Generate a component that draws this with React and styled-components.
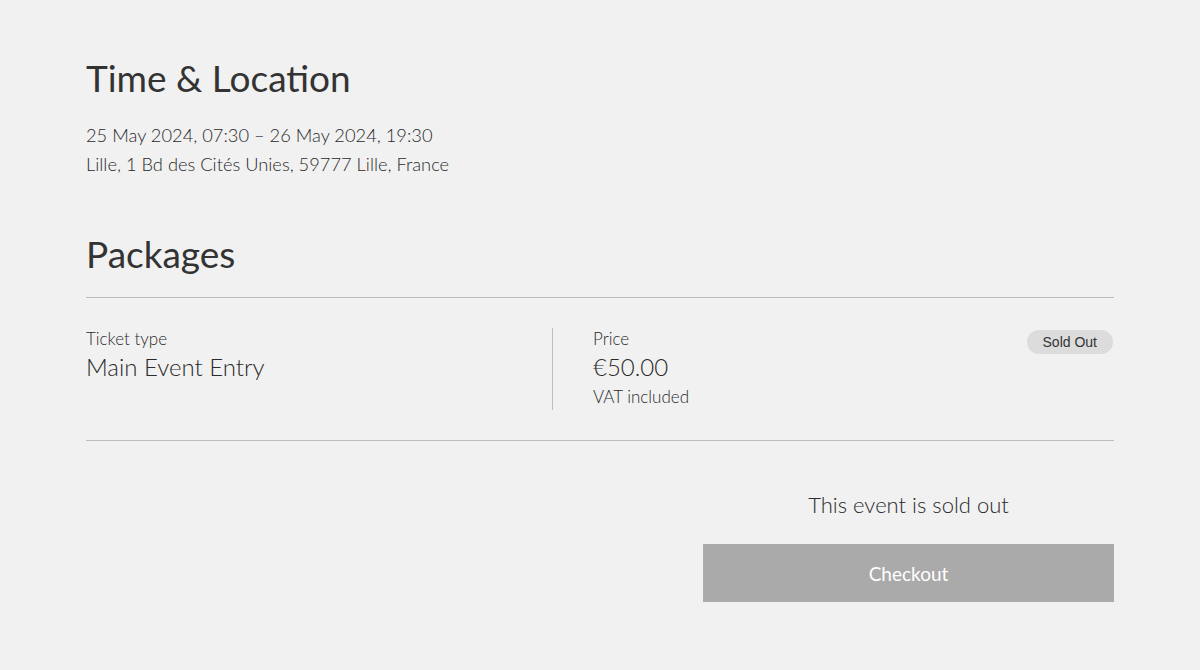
import React from 'react';
import styled, { createGlobalStyle } from 'styled-components';

const Global = createGlobalStyle`
  html, body {
    margin: 0;
    padding: 0;
    background: #f1f1f1;
  }
  body {
    font-family: Lato, "Open Sans", sans-serif;
    color: #333;
  }
`;

const Page = styled.div`
  width: 1028px;
  padding: 56px 86px 0 86px;
`;

const Heading = styled.h2`
  margin: 0;
  font-size: 37px;
  font-weight: 400;
  line-height: 44px;
  color: #333;
`;

const Details = styled.div`
  margin-top: 21px;
  font-size: 18.3px;
  line-height: 29px;
  font-weight: 300;
  color: #2a2a2a;
`;

const PackagesHeading = styled(Heading)`
  margin-top: 53px;
`;

const Table = styled.div`
  margin-top: 21px;
  border-top: 1px solid #bdbdbd;
  border-bottom: 1px solid #bdbdbd;
  padding: 30px 0 30px;
  display: flex;
  align-items: stretch;
`;

const Cell = styled.div`
  flex: ${p => (p.grow ? 1 : 'none')};
  width: ${p => p.width || 'auto'};
  padding-left: ${p => p.pad || 0}px;
  border-right: ${p => (p.divider ? '1px solid #bdbdbd' : 'none')};
  position: relative;
`;

const Label = styled.div`
  font-size: 17px;
  line-height: 22px;
  font-weight: 300;
  color: #2a2a2a;
`;

const Value = styled.div`
  font-size: 24px;
  line-height: 34px;
  font-weight: 300;
  color: #2a2a2a;
`;

const Note = styled.div`
  font-size: 17px;
  line-height: 26px;
  font-weight: 300;
  color: #2a2a2a;
`;

const Badge = styled.span`
  position: absolute;
  top: 2px;
  right: 1px;
  background: #dcdcdc;
  border-radius: 12px;
  padding: 3px 16px;
  font-family: "Liberation Sans", Arial, sans-serif;
  font-size: 14px;
  line-height: 18px;
  color: #333;
`;

const Footer = styled.div`
  display: flex;
  flex-direction: column;
  align-items: flex-end;
`;

const SoldNote = styled.div`
  width: 411px;
  margin-top: 50px;
  text-align: center;
  font-size: 22px;
  line-height: 28px;
  font-weight: 300;
  color: #2a2a2a;
`;

const Checkout = styled.button`
  width: 411px;
  height: 58px;
  margin-top: 25px;
  border: none;
  background: #aaaaaa;
  color: #fff;
  font-family: Lato, "Open Sans", sans-serif;
  font-size: 19px;
  font-weight: 400;
  cursor: default;
`;

export default function App() {
  return (
    <>
      <Global />
      <Page>
        <Heading>Time &amp; Location</Heading>
        <Details>
          <div>25 May 2024, 07:30 – 26 May 2024, 19:30</div>
          <div>Lille, 1 Bd des Cités Unies, 59777 Lille, France</div>
        </Details>

        <PackagesHeading>Packages</PackagesHeading>
        <Table>
          <Cell width="466px" divider>
            <Label>Ticket type</Label>
            <Value>Main Event Entry</Value>
          </Cell>
          <Cell grow pad={40}>
            <Label>Price</Label>
            <Value>€50.00</Value>
            <Note>VAT included</Note>
            <Badge>Sold Out</Badge>
          </Cell>
        </Table>

        <Footer>
          <SoldNote>This event is sold out</SoldNote>
          <Checkout disabled>Checkout</Checkout>
        </Footer>
      </Page>
    </>
  );
}
